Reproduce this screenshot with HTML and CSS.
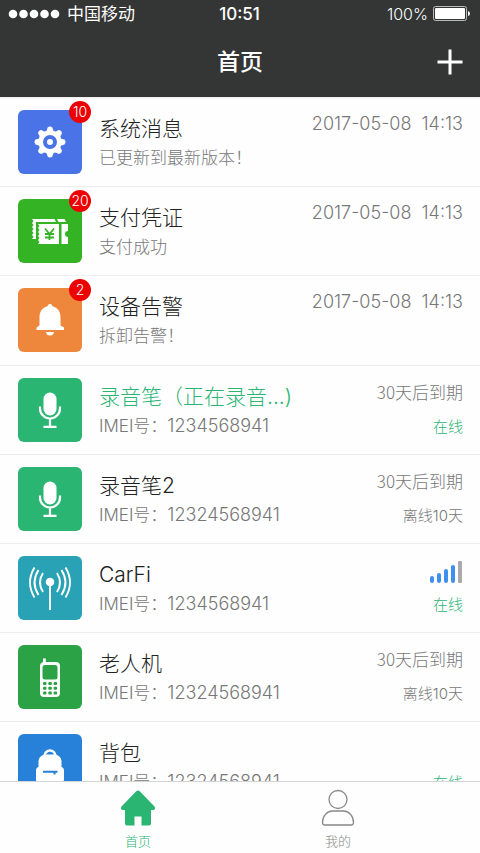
FILE: index.html
```html
<!DOCTYPE html>
<html lang="zh-CN">
<head>
<meta charset="utf-8">
<meta name="viewport" content="width=device-width, initial-scale=1">
<title>首页</title>
<link rel="stylesheet" href="styles.css">
</head>
<body>
<header class="top">
  <div class="status">
    <div class="carrier">
      <svg class="dots" viewBox="0 0 52 10" aria-hidden="true"><circle cx="5" cy="5" r="4.3"/><circle cx="15.5" cy="5" r="4.3"/><circle cx="26" cy="5" r="4.3"/><circle cx="36.5" cy="5" r="4.3"/><circle cx="47" cy="5" r="4.3"/></svg>
      <span>中国移动</span>
    </div>
    <div class="clock">10:51</div>
    <div class="power">
      <span>100%</span>
      <svg class="battery" viewBox="0 0 38 16" aria-hidden="true"><rect x=".5" y=".5" width="33" height="14" rx="2" fill="none" stroke="#bbb"/><rect x="2" y="2" width="30" height="11" rx="1" fill="#fff"/><path d="M35 5q2 .5 2 2.500t-2 2.500z" fill="#fff"/></svg>
    </div>
  </div>
  <div class="nav">
    <h1>首页</h1>
    <button class="add" type="button" aria-label="添加"><svg viewBox="0 0 26 26"><path d="M13 .5v25M.5 13h25" stroke="#fff" stroke-width="3"/></svg></button>
  </div>
</header>

<main class="list">
  <ul class="group">
    <li class="row">
      <div class="tile blue">
        <svg viewBox="0 0 64 64"><g transform="translate(32 32)"><g fill="#fff"><circle r="11.500"/><path id="tooth" d="M-4.500-10Q-2.700-11.500-2.400-14.500Q0-16.500 2.400-14.500Q2.700-11.500 4.500-10z"/><use href="#tooth" transform="rotate(45)"/><use href="#tooth" transform="rotate(90)"/><use href="#tooth" transform="rotate(135)"/><use href="#tooth" transform="rotate(180)"/><use href="#tooth" transform="rotate(225)"/><use href="#tooth" transform="rotate(270)"/><use href="#tooth" transform="rotate(315)"/></g><circle r="5" fill="#fff" stroke="#4a73e8" stroke-width="4"/></g></svg>
        <span class="badge">10</span>
      </div>
      <div class="text"><h2>系统消息</h2><p>已更新到最新版本！</p></div>
      <div class="side"><time class="num">2017-05-08&nbsp; 14:13</time></div>
    </li>
    <li class="row">
      <div class="tile green">
        <svg viewBox="0 0 64 64"><path fill="#fff" d="M14 20h22.500l1.500 3H18v17h-4l1.500-2-1.500-2 1.500-2-1.500-2 1.500-2-1.500-2 1.500-2-1.500-2 1.500-2zM39 20h7.500l1.500 3H40.500zM20 25h21v20H20l1.500-2-1.500-2 1.500-2-1.500-2 1.500-2-1.500-2 1.500-2-1.500-2 1.500-2zM43.500 25H50v7a3 3 0 0 0 0 6v7h-6.500z"/><path d="M27 29.500l4.500 5.500 4.500-5.500M27 35h9M27 38.500h9M31.500 35v6" fill="none" stroke="#34b424" stroke-width="1.800"/></svg>
        <span class="badge">20</span>
      </div>
      <div class="text"><h2>支付凭证</h2><p>支付成功</p></div>
      <div class="side"><time class="num">2017-05-08&nbsp; 14:13</time></div>
    </li>
    <li class="row">
      <div class="tile orange">
        <svg viewBox="0 0 64 64"><path fill="#fff" d="M32 16q2 0 2.500 2.200C40 19.500 42.500 24 42.500 29v8.500l3.500 2v2.500H18.500v-2.500l3-2V29c0-5 2.500-9.500 8-10.800Q30 16 32 16zM28 44h8q-.5 3.500-4 3.500t-4-3.500z"/></svg>
        <span class="badge">2</span>
      </div>
      <div class="text"><h2>设备告警</h2><p>拆卸告警！</p></div>
      <div class="side"><time class="num">2017-05-08&nbsp; 14:13</time></div>
    </li>
  </ul>
  <ul class="group devices">
    <li class="row">
      <div class="tile mint"><svg viewBox="0 0 64 64"><rect x="25.500" y="14.500" width="13" height="23" rx="6.500" fill="#fff"/><path d="M22 28.500v2a10 10 0 0 0 20 0v-2M32 40.500v8M25.500 48.800h13" fill="none" stroke="#fff" stroke-width="2.200"/></svg></div>
      <div class="text"><h2 class="online">录音笔（正在录音...)</h2><p>IMEI号：<span class="num">1234568941</span></p></div>
      <div class="side"><span class="expiry">30天后到期</span><small class="online">在线</small></div>
    </li>
    <li class="row">
      <div class="tile mint"><svg viewBox="0 0 64 64"><rect x="25.500" y="14.500" width="13" height="23" rx="6.500" fill="#fff"/><path d="M22 28.500v2a10 10 0 0 0 20 0v-2M32 40.500v8M25.500 48.800h13" fill="none" stroke="#fff" stroke-width="2.200"/></svg></div>
      <div class="text"><h2>录音笔2</h2><p>IMEI号：<span class="num">12324568941</span></p></div>
      <div class="side"><span class="expiry">30天后到期</span><small>离线10天</small></div>
    </li>
    <li class="row">
      <div class="tile teal"><svg viewBox="0 0 64 64"><circle cx="32" cy="26" r="4.300" fill="#fff"/><path d="M32 28v26M25 17q-6 9.500 0 19M20.500 14q-8 12.500 0 25M16.500 11.500q-9 15 0 30M39 17q6 9.500 0 19M43.500 14q8 12.500 0 25M47.500 11.500q9 15 0 30" fill="none" stroke="#fff" stroke-width="1.900"/></svg></div>
      <div class="text"><h2>CarFi</h2><p>IMEI号：<span class="num">1234568941</span></p></div>
      <div class="side"><svg class="signal" viewBox="0 0 33 23" preserveAspectRatio="xMidYMax meet" role="img" aria-label="信号"><g fill="#3f8fef"><rect x="0" y="15" width="4" height="7" rx="2"/><rect x="7" y="12" width="4" height="10" rx="2"/><rect x="14" y="8" width="4" height="14" rx="2"/><rect x="21" y="4" width="4" height="18" rx="2"/></g><rect x="28" y="0" width="4" height="22" rx="1" fill="#aaa"/></svg><small class="online">在线</small></div>
    </li>
    <li class="row">
      <div class="tile leaf"><svg viewBox="0 0 64 64"><path fill="#fff" d="M25 17v-3.500h2.800V17H38q4 0 4 4v27q0 4-4 4H26q-4 0-4-4V21q0-3 3-4z"/><rect x="24.500" y="20" width="15" height="14.500" rx="2.500" fill="#2ba245"/><g fill="#2ba245"><rect x="25" y="37" width="3.500" height="3" rx="1"/><rect x="30.300" y="37" width="3.500" height="3" rx="1"/><rect x="35.600" y="37" width="3.500" height="3" rx="1"/><rect x="25" y="41.800" width="3.500" height="3" rx="1"/><rect x="30.300" y="41.800" width="3.500" height="3" rx="1"/><rect x="35.600" y="41.800" width="3.500" height="3" rx="1"/><rect x="25" y="46.600" width="3.500" height="3" rx="1"/><rect x="30.300" y="46.600" width="3.500" height="3" rx="1"/><rect x="35.600" y="46.600" width="3.500" height="3" rx="1"/></g></svg></div>
      <div class="text"><h2>老人机</h2><p>IMEI号：<span class="num">12324568941</span></p></div>
      <div class="side"><span class="expiry">30天后到期</span><small>离线10天</small></div>
    </li>
    <li class="row">
      <div class="tile sky"><svg viewBox="0 0 64 64"><path d="M26.500 22a5.500 5.500 0 0 1 11 0" fill="none" stroke="#fff" stroke-width="2.500"/><path fill="#fff" d="M27 20.500h10q6 1 6.500 6.500v6q2.500.5 2.500 3.500v9q0 2-2.500 2v3h-23v-3q-2.500 0-2.500-2v-9q0-3 2.500-3.500v-6q.5-5.500 6.500-6.500z"/><path d="M25 37.800h14.500M36.500 38v2.500" fill="none" stroke="#2781d9" stroke-width="2"/></svg></div>
      <div class="text"><h2>背包</h2><p>IMEI号：<span class="num">12324568941</span></p></div>
      <div class="side"><span class="expiry">&nbsp;</span><small class="online">在线</small></div>
    </li>
  </ul>
</main>

<nav class="tabs">
  <a class="tab active" href="#home"><svg viewBox="0 0 38 38"><path d="M19 1.500Q20 1.500 21 2.500L35.500 17.500Q37 20 34.500 21H32v13.500q0 2-2 2h-7.500v-9h-7v9H8q-2 0-2-2V21H3.500Q1 20 2.500 17.500L17 2.500Q18 1.500 19 1.500z" fill="#2bb573"/></svg><span>首页</span></a>
  <a class="tab" href="#mine"><svg viewBox="0 0 38 38"><g fill="none" stroke="#888" stroke-width="1.300"><circle cx="19" cy="10.500" r="9"/><path d="M13.500 22h11C30 22 34.500 27 34.500 33.500q0 2.500-2.500 2.500H6q-2.500 0-2.500-2.500C3.500 27 8 22 13.500 22z"/></g></svg><span>我的</span></a>
</nav>
</body>
</html>
```

FILE: styles.css
```css
* { box-sizing: border-box; }

body {
  margin: 0;
  height: 100vh;
  display: flex;
  flex-direction: column;
  background: #fefefe;
  color: #777;
  font-family: Inter, "Noto Sans CJK SC", sans-serif;
  font-weight: 300;
}

svg { display: block; }
h1, h2, p, ul { margin: 0; padding: 0; }

.top { flex: none; background: #343635; color: #fff; }

.status {
  display: grid;
  grid-template-columns: 1fr auto 1fr;
  align-items: center;
  height: 27px;
  padding: 0 9px 0 8px;
  font-size: 16px;
  line-height: 24px;
}
.carrier { display: flex; align-items: center; gap: 7px; font-size: 17px; font-weight: 400; }
.dots { width: 52px; height: 10px; fill: #fff; }
.clock { font-size: 17px; font-weight: 500; }
.power { display: flex; align-items: center; justify-content: flex-end; gap: 5px; }
.battery { width: 38px; height: 16px; }

.nav {
  display: grid;
  grid-template-columns: 1fr auto 1fr;
  align-items: center;
  height: 70px;
  padding: 0 17px;
}
.nav h1 { grid-column: 2; font-size: 23px; line-height: 32px; font-weight: 500; }
.add { justify-self: end; padding: 0; border: 0; background: none; cursor: pointer; }
.add svg { width: 26px; height: 26px; }

.list { flex: 1; min-height: 0; overflow: hidden; }
.group { list-style: none; }
.devices { margin-top: 1px; }

.row {
  display: flex;
  gap: 17px;
  height: 89px;
  padding: 12px 17px 0 18px;
  border-top: 1px solid #ededed;
}

.tile { position: relative; flex: none; width: 64px; height: 64px; border-radius: 6px; }
.tile svg { width: 64px; height: 64px; }
.blue { background: #4a73e8; }
.green { background: #34b424; }
.orange { background: #ee873b; }
.mint { background: #2bb573; }
.teal { background: #2aa2b5; }
.leaf { background: #2ba245; }
.sky { background: #2781d9; }

.badge {
  position: absolute;
  top: -9px;
  right: -9px;
  width: 22px;
  height: 22px;
  border-radius: 11px;
  background: #ec0000;
  color: #fff;
  font-size: 14px;
  line-height: 22px;
  text-align: center;
}

.text { flex: 1; min-width: 0; padding-top: 4px; white-space: nowrap; }
.text h2 { color: #222; font-size: 21px; line-height: 30px; font-weight: 300; }
.text p { font-size: 17px; line-height: 28px; }
.num { font-size: 18px; }

.side {
  display: flex;
  flex-direction: column;
  align-items: flex-end;
  gap: 10px;
  font-size: 17px;
  line-height: 28px;
}
.expiry { font-family: "Noto Sans CJK SC", sans-serif; }
.side small { font-size: 15px; line-height: 22px; }
.signal { width: 33px; height: 28px; }

.text .online, .side .online { color: #2bb573; }

.tabs {
  flex: none;
  display: flex;
  height: 72px;
  padding: 0 42px 0 38px;
  border-top: 1px solid #d5d5d5;
}
.tab {
  display: flex;
  flex: 1;
  flex-direction: column;
  align-items: center;
  gap: 4px;
  padding-top: 7px;
  color: #888;
  font-size: 13px;
  line-height: 20px;
  text-decoration: none;
}
.tab svg { width: 38px; height: 38px; }
.tab.active { color: #2bb573; }
```
